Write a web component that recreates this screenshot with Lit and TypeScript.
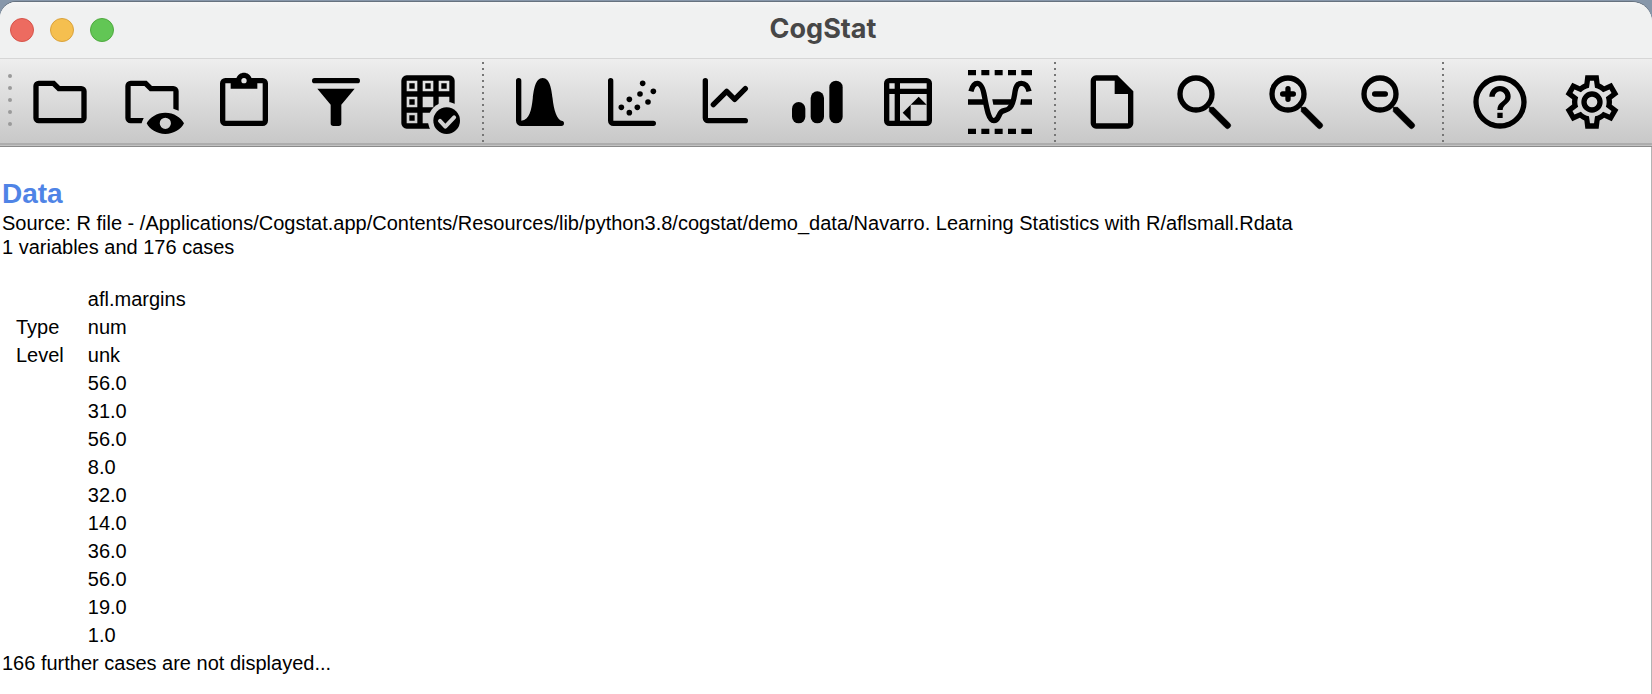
import { LitElement, css, html, svg } from "lit";
import { customElement, property } from "lit/decorators.js";

type Tool = { label: string; icon: unknown };

const magnifier = svg`
  <circle cx="9" cy="9" r="6" fill="none" stroke="currentColor" stroke-width="2" />
  <path d="M14 14H15.6L21.6 20A1.13 1.13 0 0 1 20 21.6L14 15.6Z" stroke="currentColor" stroke-width=".3" stroke-linejoin="round" />
`;

const icons = {
  folder: svg`<path d="M20,18H4V6H9.17L11.17,8H20V18M20,6H12L10,4H4A2,2 0 0,0 2,6V18A2,2 0 0,0 4,20H20A2,2 0 0,0 22,18V8A2,2 0 0,0 20,6Z" />`,
  folderEye: svg`
    <path d="M8.1 20H4A2 2 0 0 1 2 18V6A2 2 0 0 1 4 4H10L12 6H20A2 2 0 0 1 22 8V15.3Q21 14.8 20 14.5V8H11.17L9.17 6H4V18H8.9Q8.4 19 8.1 20Z" />
    <path fill-rule="evenodd" d="M17 16C13.8 16 11.1 17.8 10 20C11.1 22.2 13.8 24 17 24S22.9 22.2 24 20C22.9 17.8 20.2 16 17 16ZM17 17.9A2.1 2.1 0 1 1 17 22.1A2.1 2.1 0 1 1 17 17.9Z" />`,
  clipboard: svg`<path d="M19,3H14.82C14.4,1.84 13.3,1 12,1C10.7,1 9.6,1.84 9.18,3H5A2,2 0 0,0 3,5V19A2,2 0 0,0 5,21H19A2,2 0 0,0 21,19V5A2,2 0 0,0 19,3M12,3A1,1 0 0,1 13,4A1,1 0 0,1 12,5A1,1 0 0,1 11,4A1,1 0 0,1 12,3M7,7H17V5H19V19H5V5H7V7Z" />`,
  filter: svg`
    <rect x="3" y="3" width="18" height="2" rx="1" />
    <path d="M5 7H19L14 13V20A1 1 0 0 1 13 21H11A1 1 0 0 1 10 20V13Z" />`,
  gridCheck: svg`
    <mask id="badge-cut" maskUnits="userSpaceOnUse" x="0" y="0" width="24" height="24">
      <rect width="24" height="24" fill="#fff" />
      <circle cx="19" cy="19" r="7" fill="#000" />
    </mask>
    <mask id="tick-cut" maskUnits="userSpaceOnUse" x="12" y="12" width="14" height="14">
      <rect x="12" y="12" width="14" height="14" fill="#fff" />
      <path d="M16.5 19.1L18.5 21.2L21.8 17.8" fill="none" stroke="#000" stroke-width="1.5" stroke-linecap="round" stroke-linejoin="round" />
    </mask>
    <path mask="url(#badge-cut)" fill-rule="evenodd" d="M4 2H20A2 2 0 0 1 22 4V20A2 2 0 0 1 20 22H4A2 2 0 0 1 2 20V4A2 2 0 0 1 4 2Z
      M4 4V8H8V4Z M10 4V8H14V4Z M16 4V8H20V4Z M4 10V14H8V10Z M10 10V14H14V10Z M16 10V14H20V10Z M4 16V20H8V16Z M10 16V20H14V16Z
      M5 5H7V7H5Z M11 5H13V7H11Z M17 5H19V7H17Z M5 11H7V13H5Z M5 17H7V19H5Z" />
    <circle mask="url(#tick-cut)" cx="19" cy="19" r="5" />`,
  bell: svg`
    <path d="M4 4V19A1 1 0 0 0 5 20H20" fill="none" stroke="currentColor" stroke-width="2" stroke-linecap="round" />
    <path d="M13 3C10.2 3 9.7 7.5 9.3 10.5C8.8 15 8.1 18.6 5 19.1V20.5H20.5V19.3C18.2 18.6 17.2 15 16.7 10.5C16.3 7.5 15.8 3 13 3Z" />`,
  scatter: svg`
    <path d="M4 4V19A1 1 0 0 0 5 20H20" fill="none" stroke="currentColor" stroke-width="2" stroke-linecap="round" />
    ${[[8, 14], [11, 11], [11, 16], [14, 14], [15, 9], [16, 5], [18, 12], [20, 8]].map(
      ([x, y]) => svg`<circle cx=${x} cy=${y} r="1.05" />`
    )}`,
  line: svg`
    <path d="M5 4V18A1 1 0 0 0 6 19H20M8 13L13 8L16 11L20 7" fill="none" stroke="currentColor" stroke-width="2" stroke-linecap="round" stroke-linejoin="round" />`,
  bars: svg`
    <rect x="3" y="12" width="5" height="8" rx="2.5" />
    <rect x="10" y="8" width="5" height="12" rx="2.5" />
    <rect x="17" y="4" width="5" height="16" rx="2.5" />`,
  pivot: svg`
    <path fill-rule="evenodd" d="M5 3H19A2 2 0 0 1 21 5V19A2 2 0 0 1 19 21H5A2 2 0 0 1 3 19V5A2 2 0 0 1 5 3ZM5 5V7H7V5ZM9 5V7H19V5ZM5 9V19H7V9ZM9 9V19H19V9Z" />
    <path d="M16 10L19 13H13ZM10 16L13 13V19Z" />`,
  wave: svg`
    <path d="M0 0H3V2H0ZM5 0H8V2H5ZM10 0H13V2H10ZM15 0H18V2H15ZM20 0H24V2H20ZM0 22H3V24H0ZM5 22H8V24H5ZM10 22H13V24H10ZM15 22H18V24H15ZM20 22H24V24H20Z" />
    <path d="M0 11H6.2L6.6 13H0ZM9.1 11H17.2L16.4 13H9.5ZM19.9 11H24V13H19.6Z" />
    <path d="M1.1 8C1.5 6.5 2.3 5 3.5 5C5 5 5.7 7 6.2 10C7 14.5 7.8 19 9.7 19C11.5 19 11.4 16.6 12.5 15.7C13.5 14.9 14.6 15.4 15.7 14.1C17.2 12.5 17.3 10 17.7 7.8C18 6.2 18.7 5 20 5C21.5 5 22.4 6 22.9 8" fill="none" stroke="currentColor" stroke-width="2" />`,
  file: svg`<path d="M14,2H6A2,2 0 0,0 4,4V20A2,2 0 0,0 6,22H18A2,2 0 0,0 20,20V8L14,2M18,20H6V4H13V9H18V20Z" />`,
  search: magnifier,
  zoomIn: svg`${magnifier}<path d="M7 9H11M9 7V11" stroke="currentColor" stroke-width="2" stroke-linecap="round" />`,
  zoomOut: svg`${magnifier}<path d="M7 9H11" stroke="currentColor" stroke-width="2" stroke-linecap="round" />`,
  help: svg`<path d="M11,18H13V16H11V18M12,2A10,10 0 0,0 2,12A10,10 0 0,0 12,22A10,10 0 0,0 22,12A10,10 0 0,0 12,2M12,20C7.59,20 4,16.41 4,12C4,7.59 7.59,4 12,4C16.41,4 20,7.59 20,12C20,16.41 16.41,20 12,20M12,6A4,4 0 0,0 8,10H10A2,2 0 0,1 12,8A2,2 0 0,1 14,10C14,12 11,11.75 11,15H13C13,12.75 16,12.5 16,10A4,4 0 0,0 12,6Z" />`,
  gear: svg`<path d="M12,8A4,4 0 0,1 16,12A4,4 0 0,1 12,16A4,4 0 0,1 8,12A4,4 0 0,1 12,8M12,10A2,2 0 0,0 10,12A2,2 0 0,0 12,14A2,2 0 0,0 14,12A2,2 0 0,0 12,10M9.5,22L9.13,18.93C8.5,18.68 7.96,18.34 7.44,17.94L4.6,19.2L2.1,14.9L4.57,12.97L4.5,12L4.57,11L2.1,9.1L4.6,4.8L7.44,6.05C7.96,5.66 8.5,5.32 9.13,5.07L9.5,2H14.5L14.87,5.07C15.5,5.32 16.04,5.66 16.56,6.05L19.4,4.8L21.9,9.1L19.43,11L19.5,12L19.43,13L21.9,14.9L19.4,19.2L16.56,17.95C16.04,18.34 15.5,18.68 14.87,18.93L14.5,22H9.5M11.25,4L10.88,6.61C9.68,6.86 8.62,7.5 7.85,8.39L5.44,7.35L4.69,8.65L6.8,10.2C6.4,11.37 6.4,12.64 6.8,13.8L4.68,15.36L5.43,16.66L7.86,15.62C8.63,16.5 9.68,17.14 10.87,17.38L11.24,20H12.76L13.13,17.39C14.32,17.14 15.37,16.5 16.14,15.62L18.57,16.66L19.32,15.36L17.2,13.81C17.6,12.64 17.6,11.37 17.2,10.2L19.31,8.65L18.56,7.35L16.15,8.39C15.38,7.5 14.32,6.86 13.12,6.62L12.75,4H11.25Z" />`,
};

const toolGroups: Tool[][] = [
  [
    { label: "Open data file", icon: icons.folder },
    { label: "Open demo data file", icon: icons.folderEye },
    { label: "Paste data", icon: icons.clipboard },
    { label: "Filter outliers", icon: icons.filter },
    { label: "Display data", icon: icons.gridCheck },
  ],
  [
    { label: "Explore variable", icon: icons.bell },
    { label: "Explore relation", icon: icons.scatter },
    { label: "Regression", icon: icons.line },
    { label: "Compare groups", icon: icons.bars },
    { label: "Pivot table", icon: icons.pivot },
    { label: "Behavioral data diffusion", icon: icons.wave },
  ],
  [
    { label: "Clear results", icon: icons.file },
    { label: "Find text", icon: icons.search },
    { label: "Increase text size", icon: icons.zoomIn },
    { label: "Decrease text size", icon: icons.zoomOut },
  ],
  [
    { label: "Help", icon: icons.help },
    { label: "Preferences", icon: icons.gear },
  ],
];

@customElement("title-bar")
class TitleBar extends LitElement {
  @property() heading = "";

  static styles = css`
    .bar {
      display: grid;
      grid-template-columns: 1fr auto 1fr;
      align-items: center;
      height: 56px;
      padding: 0 16px 0 10px;
      background: linear-gradient(#f6f6f6, #f0f1f1 6px, #f0f1f1);
      border-bottom: 1px solid #d6d6d6;
    }
    .lights {
      display: flex;
      gap: 16px;
    }
    .light {
      box-sizing: border-box;
      width: 24px;
      height: 24px;
      padding: 0;
      border: 1px solid;
      border-radius: 50%;
    }
    .close {
      background: #ed6b60;
      border-color: #d5544a;
    }
    .minimize {
      background: #f5bf4f;
      border-color: #d9a23c;
    }
    .zoom {
      background: #62c655;
      border-color: #4fa93f;
    }
    .title {
      margin: 0;
      padding-bottom: 2px;
      font: 700 27px/32px Inter, "Liberation Sans", sans-serif;
      color: #474747;
    }
  `;

  render() {
    return html`
      <header class="bar">
        <div class="lights">
          <button class="light close" aria-label="Close"></button>
          <button class="light minimize" aria-label="Minimize"></button>
          <button class="light zoom" aria-label="Zoom"></button>
        </div>
        <h1 class="title">${this.heading}</h1>
      </header>
    `;
  }
}

@customElement("tool-bar")
class ToolBar extends LitElement {
  static styles = css`
    .bar {
      display: flex;
      align-items: stretch;
      height: 84px;
      background: linear-gradient(#eeeeee, #c8c8c8);
      border-bottom: 2px solid #adadad;
      box-shadow: 0 1px #c2c2c2, 0 2px #8a8a8a;
      margin-bottom: 2px;
    }
    .grip {
      display: flex;
      flex-direction: column;
      align-items: flex-end;
      justify-content: center;
      gap: 8px;
      width: 14px;
      padding: 0 2px 2px 0;
      box-sizing: border-box;
    }
    .dot {
      width: 4px;
      height: 4px;
      border-radius: 50%;
      background: #9a9a9a;
    }
    .group {
      display: flex;
    }
    .group + .group::before {
      content: "";
      width: 2px;
      height: 80px;
      margin: 3px 10px 0 8px;
      background: repeating-linear-gradient(#767676 0 2px, transparent 2px 6px);
    }
    .tool {
      display: flex;
      align-items: center;
      justify-content: center;
      width: 92px;
      padding: 1px 0 0;
      border: 0;
      background: none;
      color: #000;
    }
    .icon {
      width: 64px;
      height: 64px;
      fill: currentColor;
    }
  `;

  render() {
    return html`
      <nav class="bar" aria-label="Tools">
        <div class="grip">${[0, 1, 2, 3, 4].map(() => html`<span class="dot"></span>`)}</div>
        ${toolGroups.map(
          (group) => html`<div class="group">
            ${group.map(
              (tool) => html`<button class="tool" aria-label=${tool.label}>
                <svg class="icon" viewBox="0 0 24 24" aria-hidden="true">${tool.icon}</svg>
              </button>`
            )}
          </div>`
        )}
      </nav>
    `;
  }
}

@customElement("data-report")
class DataReport extends LitElement {
  static styles = css`
    :host {
      display: block;
      font: 20px/24px "Liberation Sans", Arial, sans-serif;
      color: #000;
    }
    .report {
      padding: 30px 2px 0;
    }
    .heading {
      margin: 0;
      font-size: 28px;
      line-height: 34px;
      font-weight: 700;
      color: #4f84e6;
    }
    .text {
      margin: 0;
    }
    .data {
      margin: 26px 0 2px;
      border-collapse: collapse;
      line-height: 28px;
      text-align: left;
    }
    .cell {
      padding: 0 12px 0 14px;
      font-weight: 400;
    }
    .cell + .cell {
      padding-left: 12px;
    }
  `;

  private rows: [string, string][] = [
    ["Type", "num"],
    ["Level", "unk"],
    ...["56.0", "31.0", "56.0", "8.0", "32.0", "14.0", "36.0", "56.0", "19.0", "1.0"].map(
      (value): [string, string] => ["", value]
    ),
  ];

  render() {
    return html`
      <main class="report">
        <h2 class="heading">Data</h2>
        <p class="text">
          Source: R file - /Applications/Cogstat.app/Contents/Resources/lib/python3.8/cogstat/demo_data/Navarro. Learning Statistics with R/aflsmall.Rdata
        </p>
        <p class="text">1 variables and 176 cases</p>
        <table class="data">
          <thead>
            <tr>
              <td class="cell"></td>
              <th class="cell" scope="col">afl.margins</th>
            </tr>
          </thead>
          <tbody>
            ${this.rows.map(
              ([name, value]) => html`<tr>
                ${name ? html`<th class="cell" scope="row">${name}</th>` : html`<td class="cell"></td>`}
                <td class="cell">${value}</td>
              </tr>`
            )}
          </tbody>
        </table>
        <p class="text">166 further cases are not displayed...</p>
      </main>
    `;
  }
}

@customElement("app-root")
class AppRoot extends LitElement {
  static styles = css`
    :host {
      display: flex;
      flex-direction: column;
      box-sizing: border-box;
      min-height: 100vh;
      padding-top: 2px;
      background: #8797aa;
    }
    .window {
      flex: 1;
      display: flex;
      flex-direction: column;
      overflow: hidden;
      border-radius: 16px 20px 0 0;
      background: #fff;
      box-shadow: 0 -1px #66727f;
    }
    .page {
      flex: 1;
      border-right: 1px solid #b4b4b4;
    }
  `;

  render() {
    return html`
      <div class="window">
        <title-bar heading="CogStat"></title-bar>
        <tool-bar></tool-bar>
        <data-report class="page"></data-report>
      </div>
    `;
  }
}
